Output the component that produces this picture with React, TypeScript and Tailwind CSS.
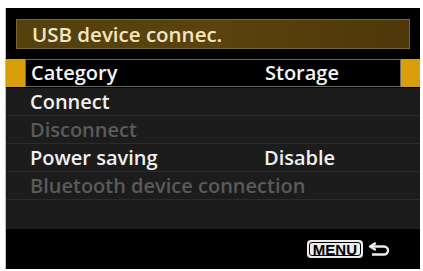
import React from "react";

const font = { fontFamily: '"Open Sans", "Noto Sans", sans-serif' };

function Row({ label, value, dim }: { label: string; value?: string; dim?: boolean }) {
  return (
    <div className="flex h-[28px] items-center border-b border-[#2c2c2c] bg-[#1c1c1c]">
      <span className={`ml-[24px] min-w-[234px] whitespace-nowrap text-[20px] font-semibold leading-none ${dim ? "text-[#5a5a5a]" : "text-[#f0f0f0]"}`}>{label}</span>
      {value && <span className="text-[20px] font-semibold leading-none text-[#f0f0f0]">{value}</span>}
    </div>
  );
}

export default function App() {
  return (
    <div className="h-[271px] w-[423px] bg-white" style={font}>
      <div className="ml-[5px] flex h-[261px] w-[415px] flex-col border-l border-[#bdbdbd] bg-black pt-[8px] translate-y-[8px]">
        <div className="mx-[10px] mt-[3px] flex h-[30px] items-center border border-[#7a6628] bg-gradient-to-r from-[#54400e] via-[#5a430c] to-[#4e380a] pl-[15px]">
          <span className="whitespace-nowrap text-[20.5px] font-semibold leading-none text-[#f2e6c2]">USB device connec.</span>
        </div>
        <div className="mt-[10px] flex h-[28px] bg-[#d89e0c] px-[19px]">
          <div className="flex flex-1 items-center border border-[#6b6b6b] bg-black">
            <span className="ml-[5px] min-w-[234px] text-[20px] font-semibold leading-none text-[#f4f4f4]">Category</span>
            <span className="text-[20px] font-semibold leading-none text-[#f4f4f4]">Storage</span>
          </div>
        </div>
        <div className="mt-px flex flex-col">
          <Row label="Connect" />
          <Row label="Disconnect" dim />
          <Row label="Power saving" value="Disable" />
          <Row label="Bluetooth device connection" dim />
          <div className="h-[29px] bg-[#1c1c1c]" />
        </div>
        <div className="flex flex-1 items-center justify-end pr-[27px]">
          <span className="flex h-[18px] items-center rounded-[4px] bg-[#ececec] p-[2px]">
            <span className="flex h-[14px] items-center rounded-[3px] border border-black px-[3px] text-[15px] font-bold leading-none text-black" style={{ fontFamily: '"Liberation Sans", sans-serif' }}>
              MENU
            </span>
          </span>
          <svg width="25" height="16" viewBox="0 0 25 16" className="ml-[5px]">
            <path d="M7 2.5 L2 5.5 L7 8.5" fill="none" stroke="#ececec" strokeWidth="2.4" strokeLinejoin="round" strokeLinecap="round" />
            <path d="M2 5.5 H16 a4 4 0 0 1 0 8 H4" fill="none" stroke="#ececec" strokeWidth="2.4" />
          </svg>
        </div>
      </div>
    </div>
  );
}
